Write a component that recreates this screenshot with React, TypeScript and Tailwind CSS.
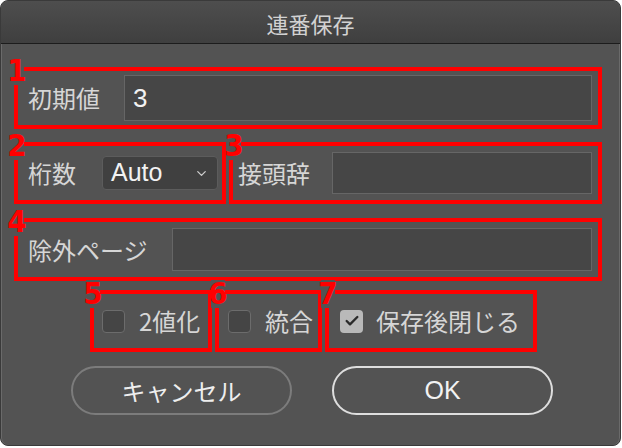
import { Check, ChevronDown } from "lucide-react";

const jp = { fontFamily: '"Noto Sans CJK JP", "Liberation Sans", sans-serif' };
const latin = { fontFamily: '"Liberation Sans", "Noto Sans CJK JP", sans-serif' };

function Tag({ n, className = "" }: { n: string; className?: string }) {
  return (
    <span
      className={`absolute flex h-[28px] w-[14px] items-start justify-center bg-[#535353] text-[31px] font-bold leading-[26px] text-[#ff0000] ${className}`}
      style={{ fontFamily: '"Liberation Sans Narrow", "DejaVu Sans Condensed", sans-serif' }}
    >
      {n}
    </span>
  );
}

function Box({
  n,
  className = "",
  tagClass = "-left-[8px] -top-[14px]",
  children,
}: {
  n: string;
  className?: string;
  tagClass?: string;
  children: React.ReactNode;
}) {
  return (
    <div className={`relative flex items-center border-4 border-[#ff0000] ${className}`}>
      <Tag n={n} className={tagClass} />
      {children}
    </div>
  );
}

function Field({ className = "", children }: { className?: string; children?: React.ReactNode }) {
  return (
    <div
      className={`flex items-center border border-[#666666] bg-[#464646] px-2 text-[26px] text-[#f2f2f2] ${className}`}
      style={latin}
    >
      {children}
    </div>
  );
}

function CheckBox({ checked = false }: { checked?: boolean }) {
  return checked ? (
    <span className="flex h-[23px] w-[23px] items-center justify-center rounded-[4px] bg-[#b9b9b9]">
      <Check className="h-[16px] w-[16px] text-[#2b2b2b]" strokeWidth={3.5} />
    </span>
  ) : (
    <span className="block h-[23px] w-[23px] rounded-[4px] border border-[#6c6c6c] bg-[#454545]" />
  );
}

export default function App() {
  return (
    <div className="h-[448px] w-[622px] bg-white">
      <div className="flex h-[446px] w-[621px] flex-col overflow-hidden rounded-[8px] border border-[#3a3a3a] bg-[#535353] shadow-[inset_1px_0_0_#6a6a6a,inset_-1px_0_0_#6a6a6a]">
        <div
          className="flex h-[43px] shrink-0 items-center justify-center border-b border-[#1c1c1c] bg-gradient-to-b from-[#4e4e4e] to-[#3f3f3f] pt-[3px] text-[22px] text-[#d2d2d2]"
          style={jp}
        >
          連番保存
        </div>

        <div className="flex flex-col pl-[13px] text-[24px] text-[#d6d6d6]" style={jp}>
          <Box n="1" className="mt-[23px] h-[62px] w-[588px]">
            <span className="ml-[10px] w-[96px] shrink-0">初期値</span>
            <Field className="h-[46px] w-[468px]">3</Field>
          </Box>

          <div className="mt-[13px] flex gap-[3px]">
            <Box n="2" className="h-[62px] w-[212px]">
              <span className="ml-[10px] w-[74px] shrink-0">桁数</span>
              <div
                className="flex h-[34px] w-[116px] items-center justify-between rounded-[4px] border border-[#5c5c5c] bg-[#404040] pl-[8px] pr-[8px] text-[25px] text-[#f2f2f2]"
                style={latin}
              >
                Auto
                <ChevronDown className="h-[15px] w-[15px] text-[#cfcfcf]" strokeWidth={2} />
              </div>
            </Box>
            <Box n="3" className="h-[62px] w-[373px]" tagClass="-left-[6px] -top-[14px]">
              <span className="ml-[5px] w-[94px] shrink-0">接頭辞</span>
              <Field className="h-[42px] w-[260px]" />
            </Box>
          </div>

          <Box n="4" className="mt-[14px] h-[63px] w-[588px]">
            <span className="ml-[10px] w-[144px] shrink-0">除外ページ</span>
            <Field className="h-[43px] w-[420px]" />
          </Box>

          <div className="mt-[9px] ml-[76px] flex gap-[3px]">
            <Box n="5" className="h-[62px] w-[122px]">
              <span className="ml-[8px]">
                <CheckBox />
              </span>
              <span className="ml-[14px]">2値化</span>
            </Box>
            <Box n="6" className="h-[62px] w-[107px]">
              <span className="ml-[9px]">
                <CheckBox />
              </span>
              <span className="ml-[14px]">統合</span>
            </Box>
            <Box n="7" className="h-[62px] w-[212px]">
              <span className="ml-[11px]">
                <CheckBox checked />
              </span>
              <span className="ml-[13px]">保存後閉じる</span>
            </Box>
          </div>

          <div className="mt-[14px] ml-[57px] flex gap-[40px]">
            <button
              type="button"
              className="h-[49px] w-[221px] rounded-full border-2 border-[#7c7c7c] text-[24px] text-[#eeeeee]"
              style={jp}
            >
              キャンセル
            </button>
            <button
              type="button"
              className="h-[49px] w-[221px] rounded-full border-2 border-[#dedede] text-[25px] text-[#f2f2f2]"
              style={latin}
            >
              OK
            </button>
          </div>
        </div>
      </div>
    </div>
  );
}
